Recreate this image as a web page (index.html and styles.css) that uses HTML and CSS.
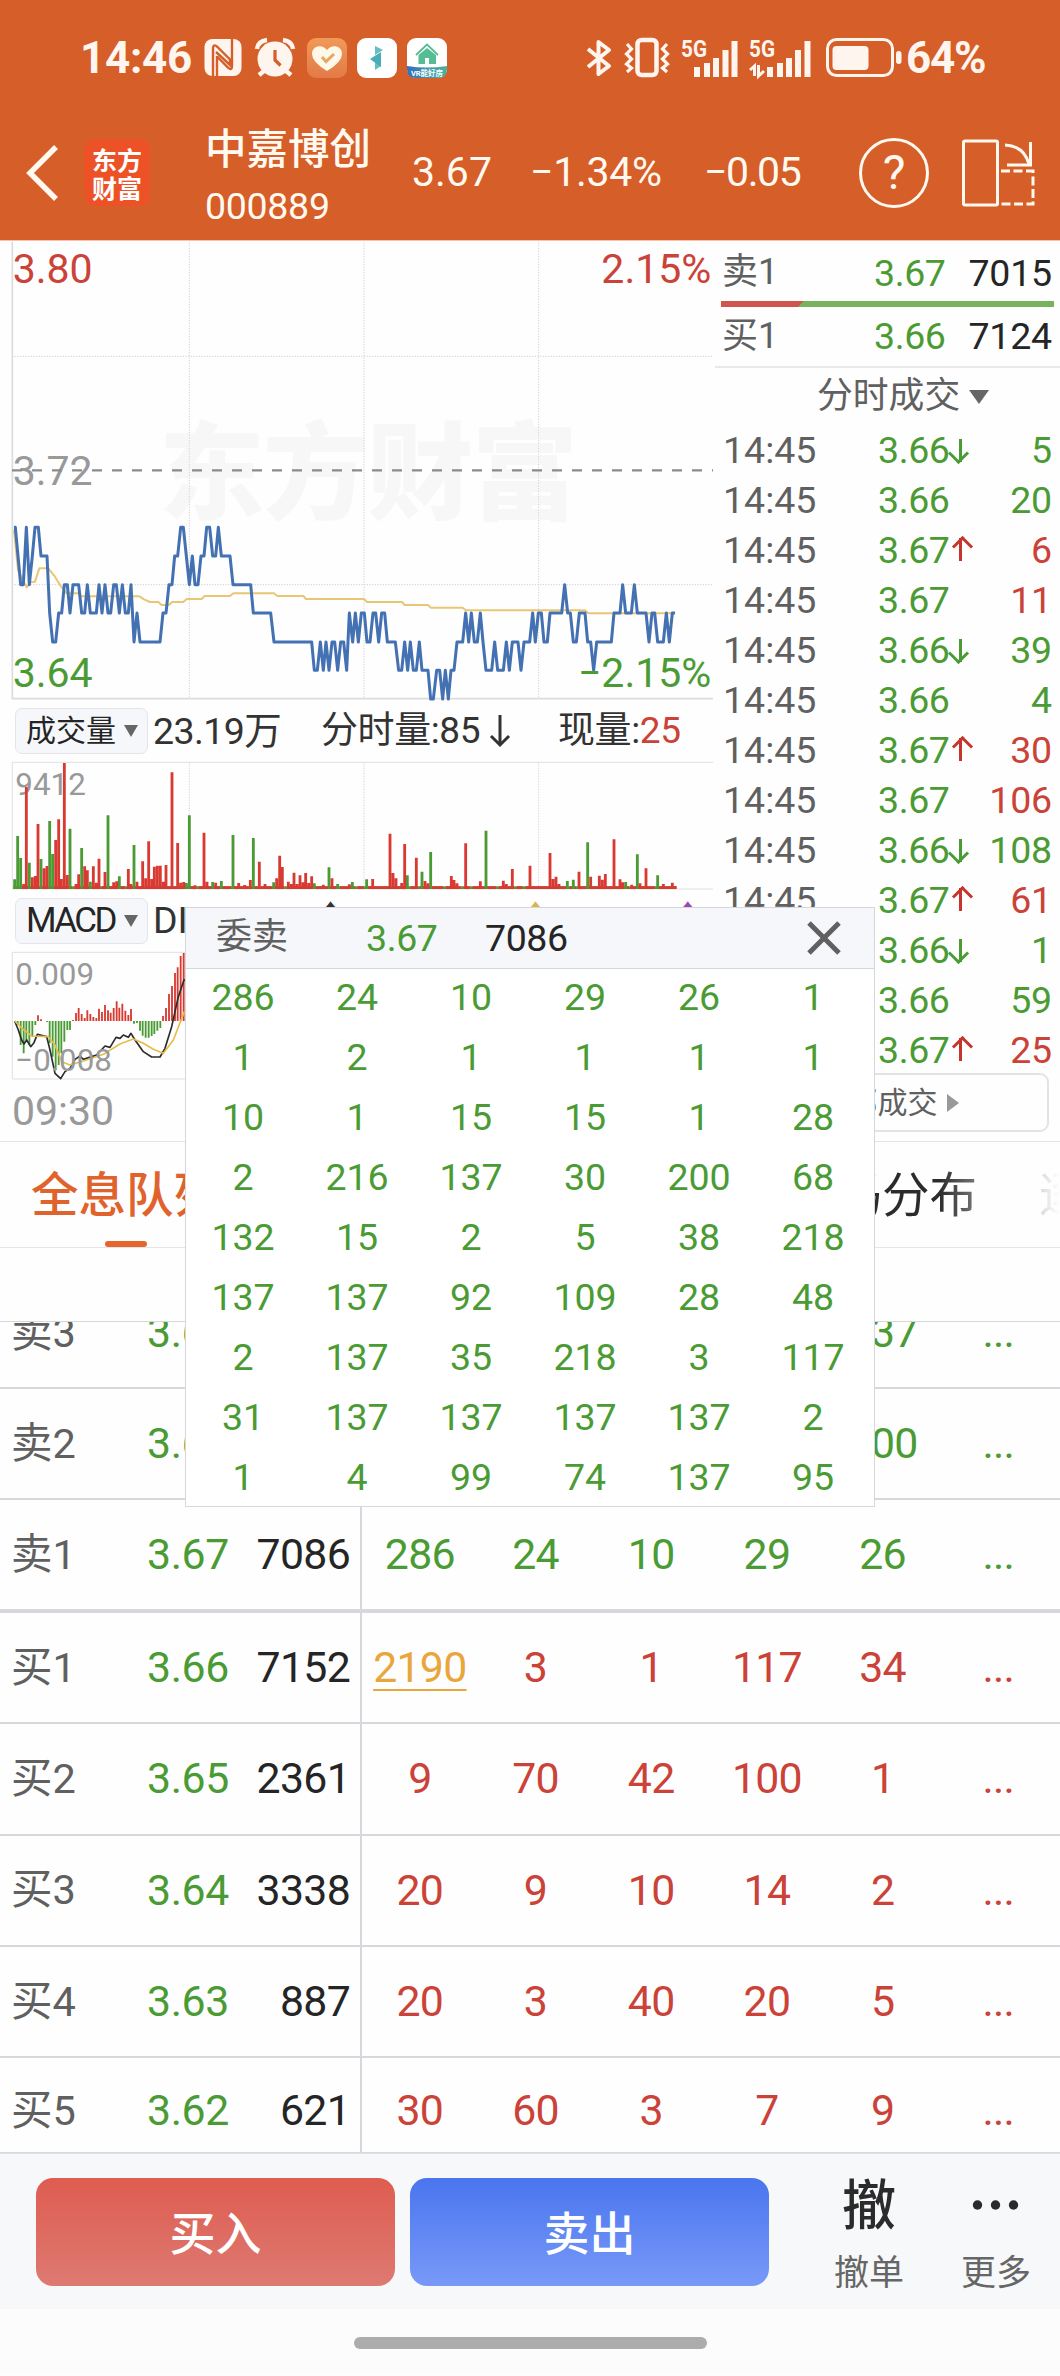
FILE: index.html
```html
<!DOCTYPE html>
<html lang="zh-CN">
<head>
    <meta charset="UTF-8">
    <meta name="viewport" content="width=device-width, initial-scale=1.0">
    <title>中嘉博创 000889</title>
    <link rel="stylesheet" href="styles.css">
</head>
<body>
    <header class="header">
        <div class="status">
            <span class="clock">14:46</span>
            <svg class="ico" width="40" height="40" viewBox="0 0 40 40">
                <rect x="0.500" y="1" width="37" height="37" rx="8" fill="#fff5ef"/>
                <path d="M9 39V11Q9 5 13.500 9L26 21.500V27L12 14M13 18V39M28 0V28Q28 33 24 29.500L13 18.500" fill="none" stroke="#d65e28" stroke-width="2.4"/>
            </svg>
            <svg class="ico alarm" width="40" height="40" viewBox="0 0 40 40">
                <path d="M2 11Q3 3 12 2M28 2Q37 3 38 11M9 33L4 37M31 33L36 37" fill="none" stroke="#fff5ef" stroke-width="4.5"/>
                <circle cx="20" cy="21" r="17.500" fill="#fff5ef"/>
                <path d="M20 12V22L25.500 27.500" fill="none" stroke="#d65e28" stroke-width="3.2"/>
            </svg>
            <svg class="ico heart" width="40" height="40" viewBox="0 0 40 40">
                <defs><linearGradient id="heartBg" x2="0" y2="1"><stop stop-color="#ef9a57"/><stop offset="1" stop-color="#e37a48"/></linearGradient></defs>
                <rect width="40" height="40" rx="9" fill="url(#heartBg)"/>
                <path d="M20 33Q5 24 5 16C5 7 16 6 20 12C24 6 35 7 35 16Q35 24 20 33Z" fill="#fff7e8"/>
                <path d="M15 19L19 23.500L27 16" fill="none" stroke="#e3a865" stroke-width="3"/>
            </svg>
            <svg class="ico app" width="40" height="40" viewBox="0 0 40 40">
                <rect width="40" height="40" rx="9" fill="#fff"/>
                <path d="M18 8L26 12L18 17ZM18 24L24 28L18 32Z" fill="#62c0c4"/>
                <path d="M24 14V29L13 21Z" fill="#48adb6"/>
            </svg>
            <svg class="ico app" width="40" height="40" viewBox="0 0 40 40">
                <defs><linearGradient id="vrBg"><stop stop-color="#3370bd"/><stop offset="1" stop-color="#47b59b"/></linearGradient></defs>
                <rect width="40" height="40" rx="9" fill="#fff"/>
                <path d="M0 28Q20 31 40 28V31Q40 40 31 40H9Q0 40 0 31Z" fill="url(#vrBg)"/>
                <path d="M9 17L20 6.500L31 17" fill="none" stroke="#55bd93" stroke-width="1.800"/>
                <path d="M11.500 17L20 10L29 17V26H22V20H18V26H11.500Z" fill="#55bd93"/>
                <text class="vr" x="20" y="37.500" text-anchor="middle">VR能好房</text>
            </svg>
            <svg class="ico bt" width="26" height="40" viewBox="0 0 26 40">
                <path d="M2 11L23 28L12.500 36V4L23 12L2 29" fill="none" stroke="#fff5ef" stroke-width="4" stroke-linejoin="round"/>
            </svg>
            <svg class="ico vib" width="46" height="40" viewBox="0 0 46 40">
                <rect x="13.500" y="2" width="19" height="35" rx="4" fill="none" stroke="#fff5ef" stroke-width="4.500"/>
                <path d="M3 6L7.500 11L2.500 16L7.500 21L2.500 26L7.500 30L3 34M43 6L38.500 11L43.500 16L38.500 21L43.500 26L38.500 30L43 34" fill="none" stroke="#fff5ef" stroke-width="3.200"/>
            </svg>
            <svg class="ico sig" width="57" height="40" viewBox="0 0 57 40">
                <text class="net" x="0" y="19" textLength="26" lengthAdjust="spacingAndGlyphs">5G</text>
                <path d="M16 39V29M26 39V25M35 39V20M44.500 39V12M53.500 39V3" stroke="#fff5ef" stroke-width="6"/>
            </svg>
            <svg class="ico sig sig2" width="62" height="40" viewBox="0 0 62 40">
                <text class="net" x="0" y="19" textLength="26" lengthAdjust="spacingAndGlyphs">5G</text>
                <path d="M1 32L5.500 28V38M9.500 27V38L15 33" fill="none" stroke="#fff5ef" stroke-width="3"/>
                <path d="M21 39V29M31 39V25M40 39V20M49 39V12M58.500 39V3" stroke="#fff5ef" stroke-width="6"/>
            </svg>
            <svg class="ico bat" width="76" height="40" viewBox="0 0 76 40">
                <rect x="1.500" y="1.500" width="65" height="36" rx="9" fill="none" stroke="#fff5ef" stroke-width="3"/>
                <rect x="6.500" y="8" width="36" height="24" rx="4" fill="#fff5ef"/>
                <rect x="70" y="13" width="5.500" height="13" rx="2.700" fill="#fff5ef"/>
            </svg>
            <span class="percent">64%</span>
        </div>
        <div class="nav">
            <svg class="back" width="34" height="58" viewBox="0 0 34 58">
                <path d="M30 3L4 29L30 55" fill="none" stroke="#fff9f0" stroke-width="5.500"/>
            </svg>
            <div class="logo"><span>东方</span><span>财富</span></div>
            <div class="stock">
                <div class="name">中嘉博创</div>
                <div class="code">000889</div>
            </div>
            <div class="quote q1">3.67</div>
            <div class="quote q2">−1.34%</div>
            <div class="quote q3">−0.05</div>
            <div class="help">?</div>
            <svg class="rotate" width="74" height="70" viewBox="0 0 74 70">
                <rect x="1.500" y="3" width="34" height="64" rx="1.500" fill="none" stroke="#fff9f0" stroke-width="3"/>
                <path d="M43 7Q62 8 67 26M68.500 4V27H45" fill="none" stroke="#fff9f0" stroke-width="3"/>
                <path d="M39 33H71V66H39" fill="none" stroke="#fff9f0" stroke-width="3" stroke-dasharray="9 3.500"/>
            </svg>
        </div>
    </header>

    <main class="market">
        <section class="charts">
            <!-- Цена -->
            <svg class="price-chart" viewBox="0 0 2145 1380">
                <text class="mark" x="476" y="812">东方财富</text>
                <path class="grid" d="M568 0V1376M1092 0V1376M1616 0V1376M36 349H2139M36 1034H2139"/>
                <path class="frame" d="M37 5V1376H2139"/>
                <text class="lbl gray" x="38" y="734">3.72</text>
                <path class="mid" d="M36 691H2139"/>
                <polyline class="avg" points="42,870 54,990 80,1042 92,1027 105,1025 118,985 145,985 165,1010 180,1035 200,1060 235,1060 245,1069 418,1069 432,1078 450,1086 475,1086 485,1095 507,1095 516,1086 550,1086 560,1077 605,1077 614,1068 690,1068 700,1060 822,1060 832,1068 910,1068 918,1077 1092,1077 1101,1086 1206,1086 1214,1095 1284,1095 1292,1103 1388,1103 1397,1111 1755,1111 1765,1120 2017,1120"/>
                <polyline class="price" points="42,862 46,862 54,948 62,1034 70,1034 79,862 88,1034 97,948 105,862 115,862 123,948 141,948 149,1119 158,1206 167,1206 176,1119 185,1119 193,1034 202,1034 210,1119 219,1034 236,1034 245,1119 254,1119 262,1034 271,1119 289,1119 297,1034 306,1119 315,1034 324,1119 332,1119 341,1034 349,1034 358,1119 367,1034 376,1119 385,1119 393,1034 402,1206 411,1119 420,1206 480,1206 489,1119 498,1119 507,1034 516,1034 524,948 533,948 542,862 550,862 559,948 568,1034 577,948 585,1034 594,1034 603,948 612,948 620,862 629,862 638,948 647,948 655,862 664,948 690,948 699,1034 752,1034 760,1119 812,1119 822,1206 935,1206 943,1291 952,1291 961,1206 970,1291 978,1206 987,1291 996,1206 1004,1206 1013,1291 1022,1206 1031,1206 1040,1291 1048,1119 1058,1206 1066,1119 1075,1206 1084,1119 1093,1119 1101,1206 1110,1206 1119,1119 1127,1119 1136,1206 1145,1119 1154,1119 1162,1206 1186,1206 1196,1291 1205,1291 1214,1206 1223,1291 1231,1206 1240,1291 1249,1291 1258,1206 1266,1291 1284,1291 1292,1377 1300,1377 1310,1291 1319,1291 1328,1377 1336,1291 1345,1377 1353,1291 1362,1291 1371,1206 1388,1206 1397,1119 1406,1206 1414,1119 1423,1206 1432,1206 1441,1119 1449,1206 1458,1291 1475,1291 1484,1206 1493,1291 1510,1291 1519,1206 1528,1291 1537,1206 1554,1206 1563,1291 1572,1206 1589,1206 1598,1119 1606,1206 1615,1119 1624,1119 1632,1206 1642,1206 1650,1119 1685,1119 1694,1034 1703,1119 1711,1119 1720,1206 1729,1206 1738,1119 1755,1119 1763,1206 1772,1206 1781,1291 1790,1206 1834,1206 1842,1119 1860,1119 1868,1034 1877,1119 1894,1119 1903,1034 1912,1119 1938,1119 1947,1206 1956,1119 1964,1119 1973,1206 1990,1206 1999,1119 2008,1206 2017,1119 2025,1119"/>
                <text class="lbl red" x="38" y="128">3.80</text>
                <text class="lbl green" x="38" y="1342">3.64</text>
                <text class="lbl red" x="2134" y="128" text-anchor="end">2.15%</text>
                <text class="lbl green" x="2134" y="1342" text-anchor="end">−2.15%</text>
            </svg>
            <div class="ind">
                <div class="picker"><span>成交量</span><i class="down"></i></div>
                <span class="v1">23.19万</span>
                <span class="v2">分时量:85<svg width="20" height="34" viewBox="0 0 20 34"><path d="M10 1V31M1 22L10 31L19 22" fill="none" stroke="#333" stroke-width="3"/></svg></span>
                <span class="v3">现量:<b class="red">25</b></span>
            </div>
            <!-- Объём -->
            <svg class="sub-chart" viewBox="0 216 2145 384">
                <path class="grid" d="M568 217V597M1092 217V597M1616 217V597"/>
                <path class="thin" d="M37 217H2139M37 217V597H2139"/>
                <text class="small gray" x="46" y="314">9412</text>
                <path class="base-g" d="M40 593H2029"/>
                <path class="base-r" d="M66 593H2029"/>
                <path class="vol g" d="M44 597V568M53 597V438M62 597V504M88 597V518M123 597V507M149 597V393M158 597V492M210 597V416M245 597V474M271 597V575M324 597V376M358 597V559M402 597V465M559 597V579M568 597V376M638 597V576M664 597V573M699 597V435M760 597V444M821 597V577M943 597V580M987 597V532M1013 597V582M1057 597V576M1100 597V568M1222 597V556M1266 597V545M1292 597V486M1458 597V422M1702 597V573M1720 597V569M1763 597V457M1877 597V576M1912 597V493M1973 597V556"/>
                <path class="vol r" d="M71 597V582M79 597V290M97 597V562M106 597V558M114 597V402M132 597V535M141 597V528M167 597V450M176 597V388M184 597V567M193 597V219M202 597V555M228 597V582M236 597V553M254 597V529M262 597V541M280 597V529M289 597V578M297 597V506M315 597V546M341 597V577M350 597V574M385 597V537M393 597V582M411 597V575M428 597V514M437 597V565M446 597V454M455 597V567M463 597V530M472 597V527M481 597V527M490 597V575M498 597V525M516 597V247M533 597V459M542 597V578M551 597V576M585 597V586M612 597V428M621 597V575M647 597V578M716 597V579M734 597V585M751 597V570M778 597V515M795 597V582M830 597V565M839 597V497M847 597V531M865 597V575M874 597V582M882 597V548M891 597V582M900 597V556M909 597V577M917 597V549M926 597V579M935 597V559M970 597V584M996 597V565M1048 597V583M1118 597V567M1170 597V431M1179 597V549M1188 597V565M1205 597V579M1214 597V462M1249 597V503M1275 597V573M1284 597V580M1354 597V558M1362 597V570M1371 597V580M1397 597V460M1441 597V574M1510 597V572M1519 597V582M1537 597V537M1590 597V527M1650 597V489M1659 597V567M1668 597V560M1677 597V582M1737 597V545M1772 597V560M1798 597V557M1807 597V569M1816 597V552M1842 597V448M1860 597V568M1868 597V577M1895 597V584M1920 597V580M1938 597V535M1990 597V582M2017 597V578M2025 597V588"/>
            </svg>
            <div class="ind">
                <div class="picker"><span>MACD</span><i class="down"></i></div>
                <span class="v1">DIF:0.006↑</span>
                <span class="dea">DEA:0.003↑</span>
                <span class="m">M:0.008↑</span>
            </div>
            <!-- MACD -->
            <svg class="sub-chart" viewBox="0 786 2145 384">
                <path class="thin" d="M37 787H2139M37 787V1167H2139"/>
                <path class="macd r" d="M114 993V976M123 993V988M219 993V990M228 993V969M236 993V954M245 993V972M254 993V984M262 993V961M271 993V972M280 993V981M289 993V984M297 993V956M306 993V966M315 993V945M324 993V961M332 993V968M341 993V954M350 993V934M358 993V953M367 993V941M376 993V962M385 993V975M393 993V957M489 993V978M498 993V954M507 993V912M516 993V888M525 993V849M533 993V832M542 993V798M551 993V789"/>
                <path class="macd g" d="M53 993V1005M62 993V1065M71 993V1090M79 993V1050M88 993V1065M97 993V1040M106 993V1005M141 993V996M149 993V1060M158 993V1100M167 993V1140M176 993V1125M184 993V1090M193 993V1055M202 993V1020M210 993V1020M402 993V1001M411 993V999M420 993V1022M428 993V1037M437 993V1043M446 993V1043M455 993V1038M463 993V1032M472 993V1022M481 993V1014"/>
                <polyline class="dif" points="44,993 55,1020 65,1050 72,1062 80,1050 92,1070 102,1058 112,1033 140,1040 150,1080 165,1150 182,1166 195,1145 210,1135 225,1108 240,1098 250,1108 275,1100 290,1095 315,1068 330,1072 348,1042 360,1045 370,1035 385,1042 393,1030 405,1050 430,1085 455,1101 480,1101 495,1075 515,1010 535,920 553,867"/>
                <polyline class="sig-line" points="44,993 70,1018 95,1038 145,1040 165,1065 185,1115 210,1125 250,1113 310,1093 360,1062 400,1047 430,1060 460,1078 490,1090 520,1050 553,965"/>
                <text class="small gray" x="46" y="884">0.009</text>
                <text class="small gray" x="46" y="1142">−0.008</text>
            </svg>
            <div class="time-axis">09:30</div>
        </section>

        <section class="side">
            <div class="level"><span>卖1</span><span class="p green">3.67</span><span class="q">7015</span></div>
            <div class="ratio"></div>
            <div class="level buy"><span>买1</span><span class="p green">3.66</span><span class="q">7124</span></div>
            <div class="side-title">分时成交<i class="down big"></i></div>
            <div class="ticks">
                <div class="tick"><span>14:45</span><span class="p green">3.66<i class="dn"></i></span><span class="q green">5</span></div>
                <div class="tick"><span>14:45</span><span class="p green">3.66</span><span class="q green">20</span></div>
                <div class="tick"><span>14:45</span><span class="p green">3.67<i class="up"></i></span><span class="q red">6</span></div>
                <div class="tick"><span>14:45</span><span class="p green">3.67</span><span class="q red">11</span></div>
                <div class="tick"><span>14:45</span><span class="p green">3.66<i class="dn"></i></span><span class="q green">39</span></div>
                <div class="tick"><span>14:45</span><span class="p green">3.66</span><span class="q green">4</span></div>
                <div class="tick"><span>14:45</span><span class="p green">3.67<i class="up"></i></span><span class="q red">30</span></div>
                <div class="tick"><span>14:45</span><span class="p green">3.67</span><span class="q red">106</span></div>
                <div class="tick"><span>14:45</span><span class="p green">3.66<i class="dn"></i></span><span class="q green">108</span></div>
                <div class="tick"><span>14:45</span><span class="p green">3.67<i class="up"></i></span><span class="q red">61</span></div>
                <div class="tick"><span>14:45</span><span class="p green">3.66<i class="dn"></i></span><span class="q green">1</span></div>
                <div class="tick"><span>14:45</span><span class="p green">3.66</span><span class="q green">59</span></div>
                <div class="tick"><span>14:45</span><span class="p green">3.67<i class="up"></i></span><span class="q red">25</span></div>
            </div>
            <div class="all-deals">全部成交<i class="right"></i></div>
        </section>
    </main>

    <nav class="tabs">
        <span class="tab active">全息队列</span>
        <span class="tab chips">筹码分布</span>
        <span class="tab next">逐</span>
    </nav>
    <div class="spacer"></div>

    <section class="book">
        <div class="row cut"><span class="side-name">卖3</span><span class="bp green">3.69</span><span class="bq">5120</span>
            <div class="orders green"><span>20</span><span>10</span><span>5</span><span>12</span><span>137</span><span>...</span></div></div>
        <div class="row"><span class="side-name">卖2</span><span class="bp green">3.68</span><span class="bq">4873</span>
            <div class="orders green"><span>30</span><span>10</span><span>8</span><span>50</span><span>200</span><span>...</span></div></div>
        <div class="row last-sell"><span class="side-name">卖1</span><span class="bp green">3.67</span><span class="bq">7086</span>
            <div class="orders green"><span>286</span><span>24</span><span>10</span><span>29</span><span>26</span><span>...</span></div></div>
        <div class="row"><span class="side-name">买1</span><span class="bp green">3.66</span><span class="bq">7152</span>
            <div class="orders red"><span><u>2190</u></span><span>3</span><span>1</span><span>117</span><span>34</span><span>...</span></div></div>
        <div class="row"><span class="side-name">买2</span><span class="bp green">3.65</span><span class="bq">2361</span>
            <div class="orders red"><span>9</span><span>70</span><span>42</span><span>100</span><span>1</span><span>...</span></div></div>
        <div class="row"><span class="side-name">买3</span><span class="bp green">3.64</span><span class="bq">3338</span>
            <div class="orders red"><span>20</span><span>9</span><span>10</span><span>14</span><span>2</span><span>...</span></div></div>
        <div class="row"><span class="side-name">买4</span><span class="bp green">3.63</span><span class="bq">887</span>
            <div class="orders red"><span>20</span><span>3</span><span>40</span><span>20</span><span>5</span><span>...</span></div></div>
        <div class="row"><span class="side-name">买5</span><span class="bp green">3.62</span><span class="bq">621</span>
            <div class="orders red"><span>30</span><span>60</span><span>3</span><span>7</span><span>9</span><span>...</span></div></div>
    </section>

    <footer class="actions">
        <button class="btn buy-btn">买入</button>
        <button class="btn sell-btn">卖出</button>
        <div class="act cancel"><strong>撤</strong><span>撤单</span></div>
        <div class="act more">
            <svg width="48" height="60" viewBox="0 0 48 60"><g fill="#2b2b2b"><circle cx="5.500" cy="31" r="4.700"/><circle cx="23.500" cy="31" r="4.700"/><circle cx="41.500" cy="31" r="4.700"/></g></svg>
            <span>更多</span>
        </div>
    </footer>
    <div class="home"><div class="handle"></div></div>

    <div class="popup">
        <div class="popup-head">
            <span class="popup-name">委卖</span>
            <span class="popup-price green">3.67</span>
            <span class="popup-qty">7086</span>
            <svg class="close" width="34" height="34" viewBox="0 0 34 34"><path d="M2 2L32 32M32 2L2 32" stroke="#606060" stroke-width="5"/></svg>
        </div>
        <div class="queue">
            <span>286</span><span>24</span><span>10</span><span>29</span><span>26</span><span>1</span>
            <span>1</span><span>2</span><span>1</span><span>1</span><span>1</span><span>1</span>
            <span>10</span><span>1</span><span>15</span><span>15</span><span>1</span><span>28</span>
            <span>2</span><span>216</span><span>137</span><span>30</span><span>200</span><span>68</span>
            <span>132</span><span>15</span><span>2</span><span>5</span><span>38</span><span>218</span>
            <span>137</span><span>137</span><span>92</span><span>109</span><span>28</span><span>48</span>
            <span>2</span><span>137</span><span>35</span><span>218</span><span>3</span><span>117</span>
            <span>31</span><span>137</span><span>137</span><span>137</span><span>137</span><span>2</span>
            <span>1</span><span>4</span><span>99</span><span>74</span><span>137</span><span>95</span>
        </div>
    </div>
</body>
</html>
```
FILE: styles.css
```css
* {
    box-sizing: border-box;
}

body {
    margin: 0;
    width: 1060px;
    height: 2376px;
    position: relative;
    overflow: hidden;
    background: #fefefe;
    color: #252525;
    font-family: Roboto, "Noto Sans CJK SC", sans-serif;
    font-size: 37.5px;
    line-height: 1.2;
}

svg {
    display: block;
    flex: none;
    overflow: visible;
}

span, div {
    white-space: nowrap;
}

.green { color: #4b9b35; fill: #4b9b35; }
.red { color: #cb4238; fill: #cb4238; }
.gray { fill: #999; }

/* header */
.header {
    height: 241px;
    background: #d65e28;
    border-bottom: 1px solid #f6c4ae;
    color: #fff9f0;
}

.status {
    display: flex;
    height: 105px;
    padding: 38px 0 0 80px;
    color: #fff5ef;
    font-size: 44px;
    font-weight: 700;
    line-height: 40px;
}

.clock { width: 124px; letter-spacing: -0.3px; }
.alarm { margin-left: 11px; }
.heart { margin-left: 12px; }
.app { margin-left: 10px; }
.bt { margin-left: 139px; }
.vib { margin-left: 12px; }
.sig { margin-left: 11px; }
.bat { margin-left: 15px; }
.percent { margin-left: 4px; letter-spacing: -1.3px; }

.net {
    font-size: 24px;
    font-weight: 700;
    fill: #fff5ef;
}

.vr {
    font-size: 7.5px;
    fill: #fff;
}

.nav {
    display: flex;
    align-items: center;
    height: 135px;
    padding-left: 26px;
}

.logo {
    display: flex;
    flex-direction: column;
    justify-content: center;
    width: 66px;
    height: 67px;
    margin-left: 24px;
    border-radius: 11px;
    background: #ec5226;
    font-family: "Noto Sans CJK SC", sans-serif;
    font-size: 25px;
    font-weight: 700;
    line-height: 28px;
    text-align: center;
    color: #fff;
}

.stock {
    width: 207px;
    margin: 5px 0 0 55px;
}

.name {
    height: 58px;
    font-size: 41.5px;
    font-weight: 500;
    line-height: 58px;
}

.code {
    height: 54px;
    margin-bottom: -4px;
    font-size: 37.5px;
    line-height: 54px;
    letter-spacing: -0.3px;
}

.quote { font-size: 41px; }
.q1 { width: 118px; }
.q2 { width: 174px; letter-spacing: -0.3px; }
.q3 { width: 155px; letter-spacing: -1.4px; }

.help {
    width: 70px;
    height: 70px;
    border: 3px solid #fff9f0;
    border-radius: 50%;
    font-size: 48px;
    line-height: 64px;
    text-align: center;
}

.rotate { margin-left: 33px; }

/* charts */
.market {
    display: flex;
    height: 900px;
}

.charts {
    width: 715px;
    margin-top: -1px;
}

.price-chart {
    width: 715px;
    height: 460px;
}

.sub-chart {
    width: 715px;
    height: 128px;
}

.grid {
    fill: none;
    stroke: #d5d5d5;
    stroke-width: 3;
    stroke-dasharray: 4 4;
}

.frame {
    fill: none;
    stroke: #dcdcdc;
    stroke-width: 5;
}

.thin {
    fill: none;
    stroke: #e0e0e0;
    stroke-width: 3;
}

.mid {
    stroke: #8b8b8b;
    stroke-width: 7;
    stroke-dasharray: 30 30;
}

.avg, .price, .dif, .sig-line {
    fill: none;
    stroke-linejoin: round;
}

.avg { stroke: #e8c675; stroke-width: 6; }
.price { stroke: #4471b2; stroke-width: 9; }
.dif { stroke: #2c2c2c; stroke-width: 5; }
.sig-line { stroke: #e5bd4b; stroke-width: 5; }

.lbl { font-size: 123px; }
.small { font-size: 94px; }

.mark {
    font-family: "Noto Sans CJK SC", sans-serif;
    font-size: 318px;
    font-weight: 900;
    letter-spacing: -5px;
    fill: #f7f7f7;
}

.vol { stroke-width: 8.5; }
.macd { stroke-width: 5.5; }
.r { stroke: #d83a32; }
.g { stroke: #4b9b35; }

.base-g { stroke: #6b8f2f; stroke-width: 8; }
.base-r { stroke: #d83a32; stroke-width: 8; stroke-dasharray: 44 9 18 9 70 9; }

.ind {
    display: flex;
    align-items: center;
    height: 62px;
    padding-left: 15px;
    color: #333;
}

.picker {
    display: flex;
    align-items: center;
    justify-content: space-between;
    width: 133px;
    height: 46px;
    margin-right: 5px;
    padding: 0 9px 0 10px;
    border: 1px solid #e3e5e9;
    border-radius: 7px;
    background: #f6f7fa;
    font-size: 30px;
    color: #252525;
}

.picker span { line-height: 44px; }
.sub-chart + .ind .picker span { font-size: 35px; letter-spacing: -2.6px; }

.down {
    border: 7.5px solid transparent;
    border-top: 12px solid #666;
    border-bottom: 0;
}

.v1 { width: 168px; letter-spacing: -0.6px; }
.v2 { display: flex; align-items: center; width: 237px; }
.v2, .v3 { letter-spacing: -0.4px; font-size: 37px; }
.v2 svg { margin-left: 10px; }
.v3 b { font-weight: 400; }
.sub-chart + .ind > span { position: relative; top: -1px; }
.sub-chart + .ind .v1 { width: 190px; letter-spacing: 0; }
.dea { width: 190px; color: #d9b64b; }
.m { color: #9d48b5; }

.time-axis {
    padding-left: 12px;
    font-size: 41px;
    line-height: 62px;
    color: #999;
}

/* right column */
.side {
    width: 345px;
    color: #606060;
}

.level, .tick {
    display: grid;
    grid-template-columns: 153px 80px 1fr;
    align-items: center;
    padding: 0 8px 0 7px;
}

.level { height: 60px; padding-top: 4px; }
.level .q { color: #252525; }
.p { position: relative; letter-spacing: -0.4px; }
.q { text-align: right; letter-spacing: -0.2px; }
.level > span:first-child { font-size: 36px; }
.level .p { left: -1px; }

.ratio {
    height: 6px;
    margin: 0 6px;
    background: linear-gradient(135deg, #cf554e 58px, #78b25b 59px);
}

.buy {
    height: 61px;
    padding-top: 0;
    border-bottom: 2px solid #e9e9e9;
}

.side-title {
    display: flex;
    align-items: center;
    height: 57px;
    padding-left: 102px;
    font-size: 35.8px;
}

.big {
    margin-left: 9px;
    border-width: 14px 10.5px 0;
}

.tick {
    grid-template-columns: 155px 100px 1fr;
    height: 50.08px;
    padding-left: 8px;
}

.up, .dn {
    position: absolute;
    left: 74px;
    top: 10px;
    width: 17px;
    height: 24px;
}

.up::before, .dn::before {
    content: "";
    display: block;
    width: 3px;
    height: 23px;
    margin-left: 7px;
    background: currentColor;
}

.up::after, .dn::after {
    content: "";
    display: block;
    width: 12px;
    height: 12px;
    margin: -22px 0 0 2.5px;
    border: solid currentColor;
    border-width: 3px 0 0 3px;
    transform: rotate(45deg);
}

.dn { transform: rotate(180deg); }
.up { color: #c6352b; }

.all-deals {
    display: flex;
    align-items: center;
    justify-content: center;
    width: 322px;
    height: 59px;
    margin: -3px 0 0 12px;
    border: 2px solid #e3e3e3;
    border-radius: 9px;
    font-size: 30px;
}

.right {
    margin-left: 9px;
    border: 9px solid transparent;
    border-left: 12px solid #999;
    border-right: 0;
}

/* tabs */
.tabs {
    display: flex;
    height: 107px;
    padding-left: 31px;
    border-top: 1px solid #e5e5e5;
    border-bottom: 1px solid #e5e5e5;
    font-size: 47.5px;
    line-height: 108px;
}

.tab { position: relative; }

.active {
    width: 190px;
    color: #e0632d;
    font-weight: 500;
}

.active::after {
    content: "";
    position: absolute;
    left: 74px;
    bottom: 0;
    width: 42px;
    height: 6px;
    border-radius: 3px;
    background: #e5652e;
}

.chips {
    margin-left: 566px;
    background: linear-gradient(90deg, #2b2b2b 80%, #777);
    background-clip: text;
    color: transparent;
}

.next {
    margin-left: 62px;
    background: linear-gradient(90deg, #d6d6d6, #fefefe 20px);
    background-clip: text;
    color: transparent;
}

.spacer {
    height: 74px;
    border-bottom: 1px solid #d5d7db;
}

/* order book */
.book {
    display: flex;
    flex-direction: column;
    justify-content: flex-end;
    height: 831px;
    overflow: hidden;
    font-size: 42.8px;
}

.row {
    display: flex;
    flex: none;
    align-items: center;
    height: 111.2px;
    border-bottom: 2px solid #d6d8dd;
}

.last-sell { height: 113px; border-bottom-width: 4px; }
.row:last-child { height: 95px; border-bottom-width: 1px; }
.row:last-child > span, .row:last-child .orders span { position: relative; top: 6px; }

.side-name {
    width: 147px;
    padding-left: 11px;
    font-size: 41.5px;
    color: #606060;
}

.bp { width: 90px; letter-spacing: -0.4px; }
.bq { width: 113px; text-align: right; letter-spacing: -0.7px; }

.orders {
    display: grid;
    grid-template-columns: repeat(6, 115.7px);
    align-items: center;
    align-self: stretch;
    width: 699px;
    margin-left: 10px;
    border-left: 2px solid #d6d8dd;
    text-align: center;
    letter-spacing: -0.7px;
}

.orders u {
    color: #e8a63c;
    text-decoration-thickness: 2px;
    text-underline-offset: 7px;
}

/* bottom */
.actions {
    display: flex;
    height: 156px;
    padding: 24px 0 0 36px;
    border-top: 1px solid #dfe2e6;
    background: #f6f8fa;
}

.btn {
    width: 359px;
    height: 108px;
    margin-right: 15px;
    padding: 0 0 5px;
    border: 0;
    border-radius: 17px;
    color: #fff;
    font-family: "Noto Sans CJK SC", sans-serif;
    font-size: 46px;
    font-weight: 500;
}

.buy-btn { background: linear-gradient(#df5c50, #dd7a72); }
.sell-btn { background: linear-gradient(#4a75ee, #7899f8); }

.act {
    display: flex;
    flex-direction: column;
    align-items: center;
    width: 72px;
    margin-left: 49px;
    font-size: 35px;
    color: #666;
}

.act strong {
    height: 62px;
    margin-top: -3px;
    font-size: 54px;
    font-weight: 500;
    line-height: 64px;
    color: #2b2b2b;
}

.act svg { margin: -4px 0 3px; }
.act span { line-height: 74px; }
.more { margin-left: 55px; }

.home {
    display: flex;
    justify-content: center;
    height: 66px;
    padding-top: 28px;
    background: #fcfcfc;
}

.handle {
    width: 353px;
    height: 12px;
    border-radius: 6px;
    background: #acacac;
}

/* popup over the page */
.popup {
    position: absolute;
    left: 185px;
    top: 907px;
    width: 690px;
    height: 600px;
    border: 1px solid #d4d7dc;
    background: #fff;
}

.popup-head {
    display: flex;
    align-items: center;
    height: 61px;
    padding-left: 30px;
    border-bottom: 1px solid #d4d7dc;
    background: #f6f7fa;
}

.popup-name {
    width: 150px;
    font-size: 36px;
    color: #606060;
}

.popup-price, .popup-qty { letter-spacing: -0.4px; }
.popup-price { width: 119px; }
.popup-qty { width: 322px; }

.queue {
    display: grid;
    grid-template-columns: repeat(6, 114px);
    grid-auto-rows: 60px;
    align-items: center;
    margin-top: -1.5px;
    text-align: center;
    color: #4b9b35;
}
```
